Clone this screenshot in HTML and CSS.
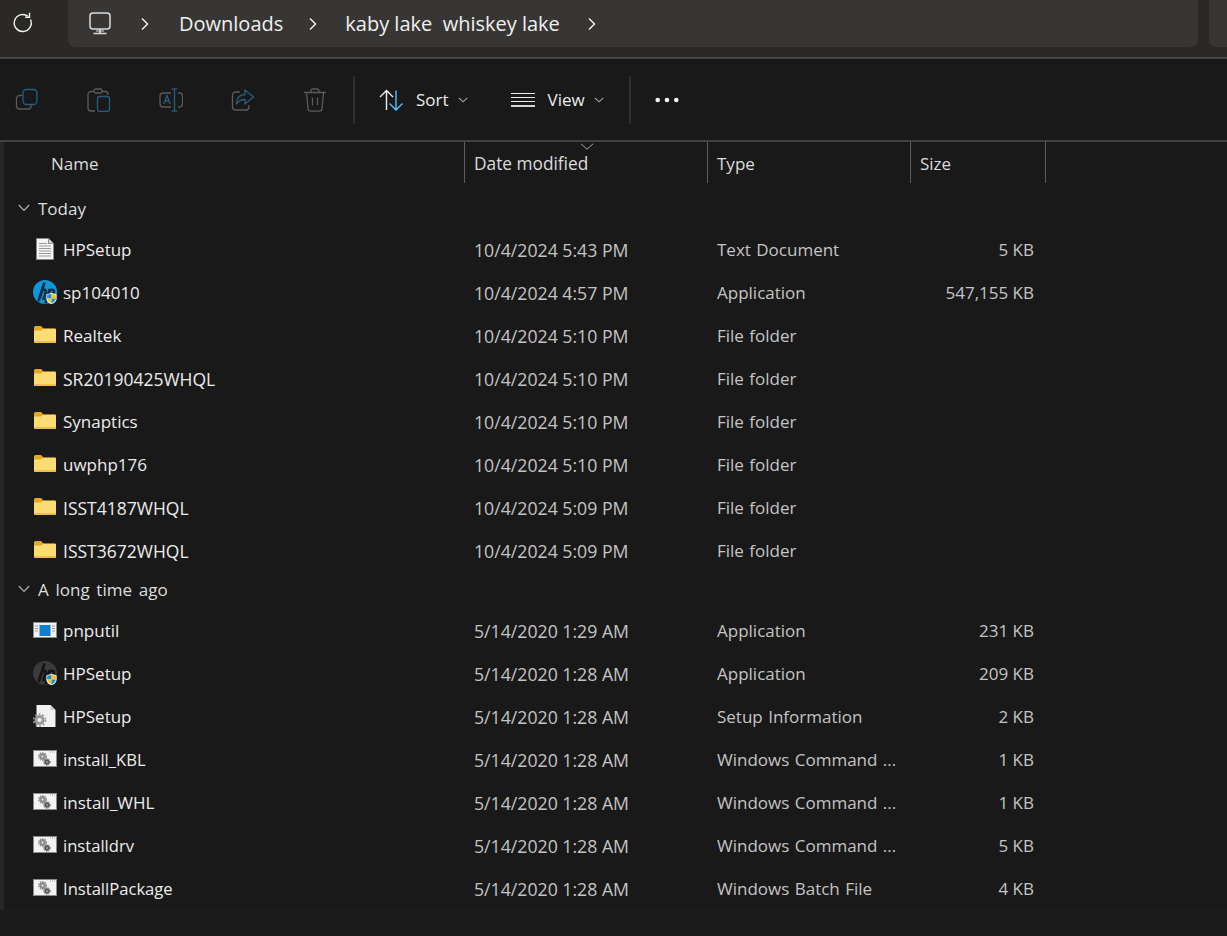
FILE: index.html
```html
<!DOCTYPE html>
<html lang="en">
<head>
<meta charset="utf-8">
<title>kaby lake whiskey lake</title>
<link rel="stylesheet" href="styles.css">
</head>
<body>
<svg class="defs" width="0" height="0">
  <defs>
    <symbol id="folder" viewBox="0 0 24 24">
      <path d="M1 4.500a1.500 1.500 0 0 1 1.500-1.500h5.500l2.500 2.500h12v4H1z" fill="#e5a823"/>
      <path d="M1 18.500V8.500q0-1 1-1h6l2.500-1.700H22q1 0 1 1v11.700q0 1.500-1.500 1.500h-19Q1 20 1 18.500z" fill="#fcdc74"/>
      <path d="M1 18.500q0 1.500 1.500 1.500h19q1.500 0 1.500-1.500v-.6H1z" fill="#eebf4c"/>
    </symbol>
    <symbol id="doc" viewBox="0 0 24 24">
      <path d="M3.500 1.500h12l5 5v16h-17z" fill="#f5f5f5" stroke="#8a8a8a"/>
      <path d="M15.500 1.500v5h5" fill="#d8d8d8" stroke="#8a8a8a"/>
      <path d="M6 6.500h8M6 9h12M6 11.500h12M6 14h12M6 16.500h12M6 19h12" stroke="#9a9a9a" stroke-width="1"/>
    </symbol>
    <symbol id="shield" viewBox="0 0 10 11">
      <path d="M5 0.300 9.700 1.800v4Q9.500 9 5 10.800 .5 9 .3 5.800v-4z" fill="#fff"/>
      <path d="M5 1 5 5.500H1V2.200z" fill="#1b8ed6"/>
      <path d="M5 1 9 2.200v3.300H5z" fill="#f9c413"/>
      <path d="M1 5.500h4V10Q1.400 8.500 1 5.500z" fill="#f9c413"/>
      <path d="M5 5.500h4Q8.600 8.500 5 10z" fill="#1b8ed6"/>
    </symbol>
    <symbol id="gears" viewBox="0 0 24 18">
      <circle cx="9.500" cy="6.500" r="2.200" fill="none" stroke="#8d8d8d" stroke-width="2.400"/>
      <circle cx="9.500" cy="6.500" r="4" fill="none" stroke="#8d8d8d" stroke-width="1.100" stroke-dasharray="1.300 1.300"/>
      <circle cx="14" cy="12" r="1.700" fill="none" stroke="#555" stroke-width="2"/>
      <circle cx="14" cy="12" r="3.300" fill="none" stroke="#555" stroke-width="1" stroke-dasharray="1.200 1.200"/>
    </symbol>
    <symbol id="batch" viewBox="0 0 24 24">
      <rect x="0" y="3" width="24" height="17" fill="#f3f3f3"/>
      <rect x=".5" y="3.500" width="23" height="16" fill="none" stroke="#8a8a8a"/>
      <path d="M17 5h5" stroke="#a8a8a8" stroke-dasharray="1 1"/>
      <use href="#gears" x="0" y="3" width="24" height="18"/>
    </symbol>
    <symbol id="hpmark" viewBox="0 0 24 24">
      <path d="M11.500 2.500 5.500 21M8 11q3.600-1.900 4.700-.5.500.8-.2 2.500l-2.200 7M17 9 12.500 23.500M15.400 11q3.600-2 5-.8 1 1-.3 3.700-1.700 3.300-6.300 3.800" fill="none" stroke="currentColor" stroke-width="2.700"/>
    </symbol>
  </defs>
</svg>

<div class="window">
  <header class="top">
    <svg class="refresh" width="24" height="24" viewBox="0 0 24 24" fill="none" stroke="#f2f2f2" stroke-width="1.400"><path d="M19.500 8.500a8.500 8.500 0 1 1-2.500-3.200"/><path d="M18.500 1.800v4.400h-4.400"/></svg>
    <nav class="crumbs">
      <svg class="pc" width="24" height="24" viewBox="0 0 24 24" fill="none" stroke="#dcdcdc" stroke-width="1.500"><rect x="2" y="1" width="20" height="16" rx="3"/><path d="M12 17v4M5.500 21.500h13" stroke-width="1.600"/><path d="M8 19h8" stroke-width="1"/></svg>
      <svg class="chev chev-a" width="12" height="14" viewBox="0 0 12 14" fill="none" stroke="#ececec" stroke-width="1.500"><path d="m3 1.500 5.500 5.500L3 12.500"/></svg>
      <span class="crumb crumb-dl">Downloads</span>
      <svg class="chev chev-b" width="12" height="14" viewBox="0 0 12 14" fill="none" stroke="#ececec" stroke-width="1.500"><path d="m3 1.500 5.500 5.500L3 12.500"/></svg>
      <span class="crumb crumb-kl">kaby lake&nbsp; whiskey lake</span>
      <svg class="chev chev-c" width="12" height="14" viewBox="0 0 12 14" fill="none" stroke="#ececec" stroke-width="1.500"><path d="m3 1.500 5.500 5.500L3 12.500"/></svg>
    </nav>
    <div class="search"></div>
  </header>

  <section class="toolbar">
    <svg class="tool" viewBox="0 0 24 24" fill="none" stroke-width="1.300"><path d="M7 7.500H4.500a3 3 0 0 0-3 3V18a3 3 0 0 0 3 3H13a3 3 0 0 0 3-3v-1" stroke="#5a5a5a"/><rect x="8" y="1.500" width="14" height="15" rx="3.500" stroke="#225f80"/></svg>
    <svg class="tool" viewBox="0 0 24 24" fill="none" stroke-width="1.300"><path d="M7.500 3.500H4a3 3 0 0 0-3 3V20a3 3 0 0 0 3 3h4" stroke="#5a5a5a"/><path d="M14.500 3.500H18a3 3 0 0 1 3 3v.5" stroke="#5a5a5a"/><rect x="7" y="1" width="8" height="4" rx="1.500" stroke="#5a5a5a"/><rect x="10.500" y="8.500" width="12" height="15" rx="2.500" stroke="#225f80"/></svg>
    <svg class="tool" viewBox="0 0 24 24" fill="none" stroke-width="1.300"><path d="M12 5H4a3 3 0 0 0-3 3v8a3 3 0 0 0 3 3h8" stroke="#5a5a5a"/><path d="M19 5h1.500a3 3 0 0 1 3 3v8a3 3 0 0 1-3 3H19" stroke="#5a5a5a"/><path d="M12.500.800h6M12.500 23.200h6M15.500.800v22.400" stroke="#225f80"/><path d="m4.800 16 3.200-8.500 3.200 8.500M6 13h4" stroke="#225f80"/></svg>
    <svg class="tool" viewBox="0 0 24 24" fill="none" stroke-width="1.300"><path d="M9 4H4.500a3 3 0 0 0-3 3v12a3 3 0 0 0 3 3H15a3 3 0 0 0 3-3v-2" stroke="#5a5a5a"/><path d="M14 2v4.500C9 6.500 5.500 9.500 5.500 16c2-3.500 5-4.500 8.500-4.500V16l8.500-7z" stroke="#225f80" stroke-linejoin="round"/></svg>
    <svg class="tool" viewBox="0 0 24 24" fill="none" stroke="#5a5a5a" stroke-width="1.300"><path d="M1 4.500h22M8 4.500V3a2 2 0 0 1 2-2h4a2 2 0 0 1 2 2v1.500"/><path d="M3.500 4.500 5 20.500a3 3 0 0 0 3 2.700h8a3 3 0 0 0 3-2.700l1.500-16"/><path d="M9.500 9.500v8M14.500 9.500v8"/></svg>
    <span class="tsep sep-a"></span>
    <svg class="tool sort-ic" viewBox="0 0 24 24" fill="none" stroke-width="1.400"><path d="M1 9 7.500 2.500 14 9M7.500 2.500V22" stroke="#f0f0f0"/><path d="M10.500 15.500 17 22l6.500-6.500M17 22V2.500" stroke="#4cc2ff"/></svg>
    <span class="tlabel">Sort</span>
    <svg class="tchev" width="10" height="6" viewBox="0 0 10 6" fill="none" stroke="#a8a8a8" stroke-width="1.100"><path d="m.8.800 4.200 4 4.200-4"/></svg>
    <svg class="tool view-ic" viewBox="0 0 24 24" fill="none" stroke="#ececec" stroke-width="1.100"><path d="M0 5.500h24M0 9.500h24M0 13.500h24"/><path d="M0 18h24" stroke-width="1.800"/></svg>
    <span class="tlabel">View</span>
    <svg class="tchev" width="10" height="6" viewBox="0 0 10 6" fill="none" stroke="#a8a8a8" stroke-width="1.100"><path d="m.8.800 4.200 4 4.200-4"/></svg>
    <span class="tsep sep-b"></span>
    <svg class="more" width="24" height="6" viewBox="0 0 24 6" fill="#f2f2f2"><circle cx="2.700" cy="3" r="2.300"/><circle cx="12" cy="3" r="2.300"/><circle cx="21.300" cy="3" r="2.300"/></svg>
  </section>

  <main class="pane">
    <div class="cols">
      <div class="col col-name">Name</div>
      <div class="col col-date">Date modified
        <svg class="sortmark" width="14" height="7" viewBox="0 0 14 7" fill="none" stroke="#a8a8a8"><path d="m1 .8 6 5.400 6-5.400"/></svg>
      </div>
      <div class="col col-type">Type</div>
      <div class="col col-size">Size</div>
    </div>

    <div class="list">
      <div class="group"><svg width="12" height="8" viewBox="0 0 12 8" fill="none" stroke="#b5b5b5" stroke-width="1.100"><path d="m.8 1 5.200 5.400L11.200 1"/></svg><span>Today</span></div>

      <div class="row"><svg class="ic"><use href="#doc"/></svg><span class="name">HPSetup</span><span class="date">10/4/2024 5:43 PM</span><span class="type">Text Document</span><span class="size">5 KB</span></div>
      <div class="row">
        <svg class="ic ic-hp" viewBox="0 0 24 24"><circle cx="12" cy="12" r="12" fill="#0f96d8"/><use href="#hpmark" width="24" height="24"/><use href="#shield" x="13" y="12.500" width="11" height="12"/></svg>
        <span class="name">sp104010</span><span class="date">10/4/2024 4:57 PM</span><span class="type">Application</span><span class="size">547,155 KB</span></div>
      <div class="row"><svg class="ic"><use href="#folder"/></svg><span class="name">Realtek</span><span class="date">10/4/2024 5:10 PM</span><span class="type">File folder</span><span class="size"></span></div>
      <div class="row"><svg class="ic"><use href="#folder"/></svg><span class="name wide">SR20190425WHQL</span><span class="date">10/4/2024 5:10 PM</span><span class="type">File folder</span><span class="size"></span></div>
      <div class="row"><svg class="ic"><use href="#folder"/></svg><span class="name">Synaptics</span><span class="date">10/4/2024 5:10 PM</span><span class="type">File folder</span><span class="size"></span></div>
      <div class="row"><svg class="ic"><use href="#folder"/></svg><span class="name">uwphp176</span><span class="date">10/4/2024 5:10 PM</span><span class="type">File folder</span><span class="size"></span></div>
      <div class="row"><svg class="ic"><use href="#folder"/></svg><span class="name wide">ISST4187WHQL</span><span class="date">10/4/2024 5:09 PM</span><span class="type">File folder</span><span class="size"></span></div>
      <div class="row"><svg class="ic"><use href="#folder"/></svg><span class="name wide">ISST3672WHQL</span><span class="date">10/4/2024 5:09 PM</span><span class="type">File folder</span><span class="size"></span></div>

      <div class="group"><svg width="12" height="8" viewBox="0 0 12 8" fill="none" stroke="#b5b5b5" stroke-width="1.100"><path d="m.8 1 5.200 5.400L11.200 1"/></svg><span>A long time ago</span></div>

      <div class="row">
        <svg class="ic" viewBox="0 0 24 24"><rect y="4" width="24" height="16" fill="#f2f2f2"/><rect x=".5" y="4.500" width="23" height="15" fill="none" stroke="#8a8a8a"/><rect x="6.500" y="7" width="11" height="11" fill="#0f7fd6"/><path d="M2 8h3M2 10.500h3M2 13h3M19 8h3M19 10.500h3M19 13h3" stroke="#9a9a9a"/></svg>
        <span class="name">pnputil</span><span class="date">5/14/2020 1:29 AM</span><span class="type">Application</span><span class="size">231 KB</span></div>
      <div class="row">
        <svg class="ic ic-hpdark" viewBox="0 0 24 24"><circle cx="12" cy="12" r="12" fill="#3a3a3a"/><use href="#hpmark" width="24" height="24"/><use href="#shield" x="13" y="12.500" width="11" height="12"/></svg>
        <span class="name">HPSetup</span><span class="date">5/14/2020 1:28 AM</span><span class="type">Application</span><span class="size">209 KB</span></div>
      <div class="row">
        <svg class="ic" viewBox="0 0 24 24"><path d="M3.500 1h14l5 5v17h-19z" fill="#f2f2f2"/><path d="M17.500 1v5h5z" fill="#c8c8c8"/><circle cx="6.500" cy="16" r="3.600" fill="none" stroke="#9a9a9a" stroke-width="3"/><circle cx="6.500" cy="16" r="6" fill="none" stroke="#9a9a9a" stroke-width="1.600" stroke-dasharray="2 1.800"/></svg>
        <span class="name">HPSetup</span><span class="date">5/14/2020 1:28 AM</span><span class="type">Setup Information</span><span class="size">2 KB</span></div>
      <div class="row"><svg class="ic"><use href="#batch"/></svg><span class="name tight">install_KBL</span><span class="date">5/14/2020 1:28 AM</span><span class="type">Windows Command ...</span><span class="size">1 KB</span></div>
      <div class="row"><svg class="ic"><use href="#batch"/></svg><span class="name">install_WHL</span><span class="date">5/14/2020 1:28 AM</span><span class="type">Windows Command ...</span><span class="size">1 KB</span></div>
      <div class="row"><svg class="ic"><use href="#batch"/></svg><span class="name tight">installdrv</span><span class="date">5/14/2020 1:28 AM</span><span class="type">Windows Command ...</span><span class="size">5 KB</span></div>
      <div class="row"><svg class="ic"><use href="#batch"/></svg><span class="name tight">InstallPackage</span><span class="date">5/14/2020 1:28 AM</span><span class="type">Windows Batch File</span><span class="size">4 KB</span></div>
    </div>
  </main>
</div>
</body>
</html>
```
FILE: styles.css
```css
* { box-sizing: border-box; }
html, body { margin: 0; padding: 0; height: 100%; }
body {
  background: #1c1c1c;
  color: #e8e8e8;
  font-family: "Open Sans", "Noto Sans", sans-serif;
  font-size: 17px;
  overflow: hidden;
}
.defs { position: absolute; }
.window { display: flex; flex-direction: column; height: 936px; overflow: hidden; }

.top {
  display: flex;
  height: 59px;
  flex: none;
  background: #2a2926;
  border-bottom: 2px solid #444;
  padding-bottom: 10px;
}
.refresh { margin: 11px 0 0 11px; flex: none; }
.crumbs {
  margin-left: 33px;
  width: 1130px;
  height: 47px;
  background: #373634;
  border-radius: 0 0 7px 7px;
  display: flex;
  align-items: center;
  flex: none;
  padding-left: 20px;
  color: #f0f0f0;
  font-size: 20px;
}
.pc { flex: none; }
.chev { flex: none; margin-top: 1px; }
.chev-a { margin-left: 27px; }
.chev-b { margin-left: 24px; }
.chev-c { margin-left: 26px; }
.crumb { white-space: nowrap; }
.crumb-dl { margin-left: 28px; }
.crumb-kl { margin-left: 26px; }
.search {
  flex: none;
  margin-left: 11px;
  width: 100px;
  height: 47px;
  background: #373634;
  border-radius: 0 0 7px 7px;
}

.toolbar {
  display: flex;
  align-items: center;
  height: 83px;
  flex: none;
  background: #191919;
  border-bottom: 2px solid #414141;
  padding-left: 15px;
}
.tool { width: 24px; height: 24px; flex: none; margin-right: 48px; }
.tsep { width: 2px; height: 48px; background: #2e2e2e; flex: none; }
.sep-a { margin-left: -22px; }
.sort-ic { margin-left: 24px; margin-right: 13px; }
.tlabel { color: #ececec; font-size: 17px; }
.tchev { margin-left: 9px; margin-top: 1px; flex: none; }
.view-ic { margin-left: 43px; margin-right: 13px; }
.sep-b { margin-left: 25px; }
.more { margin-left: 24px; flex: none; }

.pane {
  flex: 1;
  min-height: 0;
  display: flex;
  flex-direction: column;
  background: #191919;
  border-left: 4px solid #262626;
  margin-bottom: 26px;
  overflow: hidden;
}
.cols { display: flex; height: 41px; flex: none; }
.col {
  position: relative;
  display: flex;
  align-items: center;
  padding: 2px 0 0 9px;
  border-right: 1px solid #5e5e5e;
  color: #dcdcdc;
}
.col-name { width: 461px; padding-left: 47px; }
.col-date { width: 243px; font-size: 17.300px; }
.col-type { width: 203px; }
.col-size { width: 135px; }
.sortmark { position: absolute; left: 115px; top: 1px; }

.list { flex: 1; min-height: 0; padding-top: 9px; }
.group {
  display: flex;
  align-items: center;
  height: 37px;
  padding: 0 0 5px 14px;
  gap: 8px;
  color: #dedede;
  word-spacing: 2.300px;
}
.row {
  display: grid;
  grid-template-columns: 24px 417px 243px 197px 120px;
  align-items: center;
  height: 43px;
  padding: 0 0 2px 29px;
  white-space: nowrap;
}
.ic { width: 24px; height: 24px; display: block; margin-bottom: 1px; }
.ic-hp { color: #0c2c44; }
.ic-hpdark { color: #141414; }
.name { margin-left: 6px; color: #ececec; }
.wide { font-size: 17.500px; }
.tight { font-size: 16.600px; }
.date { color: #c4c4c4; font-size: 17.700px; }
.type { color: #c4c4c4; word-spacing: 1px; }
.size { color: #c4c4c4; text-align: right; }
```
